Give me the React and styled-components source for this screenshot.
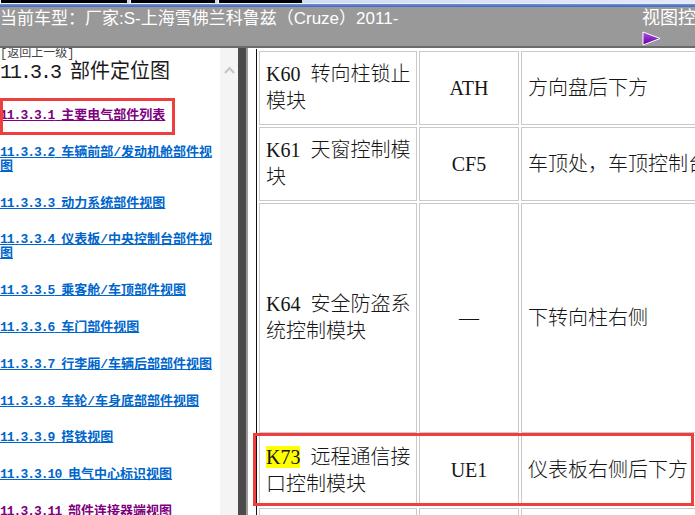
import React from 'react'
import styled, { createGlobalStyle } from 'styled-components'

const GlobalStyle = createGlobalStyle`
  html, body {
    margin: 0;
    padding: 0;
    background: #fff;
    overflow: hidden;
  }
  body {
    font-family: 'Liberation Sans', 'Noto Sans CJK SC', sans-serif;
  }
`

const Page = styled.div`
  width: 695px;
  height: 515px;
  overflow: hidden;
`

const Canvas = styled.div`
  width: 780px;
  height: 515px;
  display: flex;
  flex-direction: column;
`

const TopStrip = styled.div`
  height: 3px;
  display: flex;
  gap: 3px;
  background: linear-gradient(90deg, #c3d2ee, #e6edf8);
`

const Tab = styled.div`
  width: ${(p) => p.$w}px;
  background: #000;
  border-left: 1px solid #fff;
`

const StripLine = styled.div`
  height: 1px;
  background: #eaf0fa;
`

const BlueBand = styled.div`
  height: 3px;
  background: linear-gradient(180deg, #7393d8, #4066bd);
`

const Header = styled.div`
  height: 39px;
  background: #999;
  color: #fff;
  display: grid;
  grid-template-columns: 642px 1fr;
  box-sizing: border-box;
  padding-top: 1px;
`

const HeaderTitle = styled.div`
  font-size: 17px;
  line-height: 21px;
  white-space: nowrap;
`

const ViewControl = styled.div`
  display: flex;
  flex-direction: column;
  align-items: flex-start;
  font-size: 18px;
  line-height: 21px;
  white-space: nowrap;

  svg {
    margin-top: 2px;
  }
`

const HeaderRule = styled.div`
  height: 2px;
  background: #6a6a6a;
`

const Body = styled.div`
  display: flex;
  height: 467px;
`

const LeftPane = styled.div`
  width: 220px;
  flex: none;
  display: flex;
  flex-direction: column;
  background: #fff;
  overflow: hidden;
`

const BackLink = styled.div`
  font-family: 'Liberation Mono', 'Noto Sans CJK SC', monospace;
  font-size: 12px;
  line-height: 12px;
  color: #444;
  white-space: nowrap;
`

const Title = styled.div`
  font-family: 'Liberation Mono', 'Noto Sans CJK SC', monospace;
  font-size: 20px;
  line-height: 22px;
  color: #1a1a1a;
  margin-top: 2px;
  white-space: nowrap;
`

const Num = styled.span`
  letter-spacing: ${(p) => p.$ls}px;
`

const LinkList = styled.div`
  display: flex;
  flex-direction: column;
  gap: 22.8px;
  margin-top: 25px;
`

const LinkItem = styled.a`
  display: block;
  position: relative;
  font-family: 'Liberation Mono', 'Noto Sans CJK SC', monospace;
  font-size: 13px;
  line-height: 14px;
  font-weight: bold;
  color: ${(p) => (p.$visited ? '#800080' : '#0066cc')};
  text-decoration: underline;
  white-space: nowrap;
  cursor: pointer;

  ${(p) =>
    p.$marked &&
    `
    &::after {
      content: '';
      position: absolute;
      left: 0;
      top: -11px;
      width: 175px;
      height: 37px;
      box-sizing: border-box;
      border: 3px solid #ef3e3e;
    }
  `}
`

const Scrollbar = styled.div`
  width: 18px;
  flex: none;
  background: #f4f4f4;
  display: flex;
  justify-content: center;
  padding-top: 18px;
  box-sizing: border-box;
`

const Splitter = styled.div`
  width: 8px;
  flex: none;
  background: #4b4b4b;
  border-right: 2px solid #9c9c9c;
`

const RightFrame = styled.div`
  flex: 1;
  position: relative;
  padding: 1px 0 0 8px;
  background: #fff;
  overflow: hidden;
`

const Table = styled.table`
  border-collapse: separate;
  border-spacing: 2px;
  border-left: 1px solid #111;
  table-layout: fixed;
  width: 520px;
  font-family: 'Liberation Serif', 'Noto Sans CJK SC', serif;
  font-size: 20px;
  color: #151515;
`

const Row = styled.tr`
  height: ${(p) => p.$h}px;
`

const Cell = styled.td`
  box-sizing: border-box;
  width: ${(p) => (p.$w ? `${p.$w}px` : 'auto')};
  border: 1px solid #c9c9c9;
  padding: 0 6px;
  line-height: 27px;
  vertical-align: middle;
  white-space: nowrap;
  overflow: hidden;
  text-align: ${(p) => p.$align || 'left'};
  font-weight: 300;
`

const Mark = styled.span`
  background: #ffff00;
`

const Annotation = styled.div`
  position: absolute;
  left: ${(p) => p.$x}px;
  top: ${(p) => p.$y}px;
  width: ${(p) => p.$w}px;
  height: ${(p) => p.$h}px;
  box-sizing: border-box;
  border: 3px solid #ef3e3e;
  pointer-events: none;
`

const PlayIcon = () => (
  <svg width='20' height='15' viewBox='0 0 20 15'>
    <defs>
      <linearGradient id='play' x1='0' y1='0' x2='0' y2='1'>
        <stop offset='0' stopColor='#b24cf0' />
        <stop offset='1' stopColor='#5c0098' />
      </linearGradient>
    </defs>
    <polygon points='1,1 1,14 18,7.5' fill='url(#play)' stroke='#fff' strokeWidth='1' />
  </svg>
)

const Chevron = () => (
  <svg width='11' height='8' viewBox='0 0 11 8'>
    <polyline points='1,7 5.5,2 10,7' fill='none' stroke='#c4c4c4' strokeWidth='2' />
  </svg>
)

const links = [
  { num: '11.3.3.1', text: '主要电气部件列表', visited: true, marked: true },
  { num: '11.3.3.2', text: '车辆前部/发动机舱部件视', more: '图' },
  { num: '11.3.3.3', text: '动力系统部件视图' },
  { num: '11.3.3.4', text: '仪表板/中央控制台部件视', more: '图' },
  { num: '11.3.3.5', text: '乘客舱/车顶部件视图' },
  { num: '11.3.3.6', text: '车门部件视图' },
  { num: '11.3.3.7', text: '行李厢/车辆后部部件视图' },
  { num: '11.3.3.8', text: '车轮/车身底部部件视图' },
  { num: '11.3.3.9', text: '搭铁视图' },
  { num: '11.3.3.10', text: '电气中心标识视图' },
  { num: '11.3.3.11', text: '部件连接器端视图', visited: true },
]

const rows = [
  { h: 74, code: 'K60', name: ['转向柱锁止', '模块'], conn: 'ATH', place: '方向盘后下方' },
  { h: 74, code: 'K61', name: ['天窗控制模', '块'], conn: 'CF5', place: '车顶处，车顶控制台' },
  { h: 230, code: 'K64', name: ['安全防盗系', '统控制模块'], conn: '—', place: '下转向柱右侧' },
  { h: 71, code: 'K73', name: ['远程通信接', '口控制模块'], conn: 'UE1', place: '仪表板右侧后下方', mark: true },
  { h: 40, code: '', name: ['', ''], conn: '', place: '' },
]

const App = () => {
  return (
    <Page>
      <GlobalStyle />
      <Canvas>
        <TopStrip>
          <Tab $w={126} />
          <Tab $w={84} />
          <Tab $w={83} />
        </TopStrip>
        <StripLine />
        <BlueBand />
        <Header>
          <HeaderTitle>当前车型：厂家:S-上海雪佛兰科鲁兹（Cruze）2011-</HeaderTitle>
          <ViewControl>
            视图控制
            <PlayIcon />
          </ViewControl>
        </Header>
        <HeaderRule />
        <Body>
          <LeftPane>
            <BackLink>[返回上一级]</BackLink>
            <Title>
              <Num $ls={-2}>11.3.3 </Num>部件定位图
            </Title>
            <LinkList>
              {links.map((l) => (
                <LinkItem key={l.num} $visited={l.visited} $marked={l.marked}>
                  <Num $ls={-1}>{l.num} </Num>
                  {l.text}
                  {l.more && (
                    <>
                      <br />
                      {l.more}
                    </>
                  )}
                </LinkItem>
              ))}
            </LinkList>
          </LeftPane>
          <Scrollbar>
            <Chevron />
          </Scrollbar>
          <Splitter />
          <RightFrame>
            <Table>
              <tbody>
                {rows.map((r, i) => (
                  <Row key={i} $h={r.h}>
                    <Cell $w={158}>
                      {r.mark ? <Mark>{r.code}</Mark> : r.code}
                      {r.code && '\u00a0 '}
                      {r.name[0]}
                      <br />
                      {r.name[1]}
                    </Cell>
                    <Cell $w={100} $align='center'>
                      {r.conn}
                    </Cell>
                    <Cell>{r.place}</Cell>
                  </Row>
                ))}
              </tbody>
            </Table>
            <Annotation $x={5} $y={385} $w={441} $h={73} />
          </RightFrame>
        </Body>
      </Canvas>
    </Page>
  )
}

export default App
